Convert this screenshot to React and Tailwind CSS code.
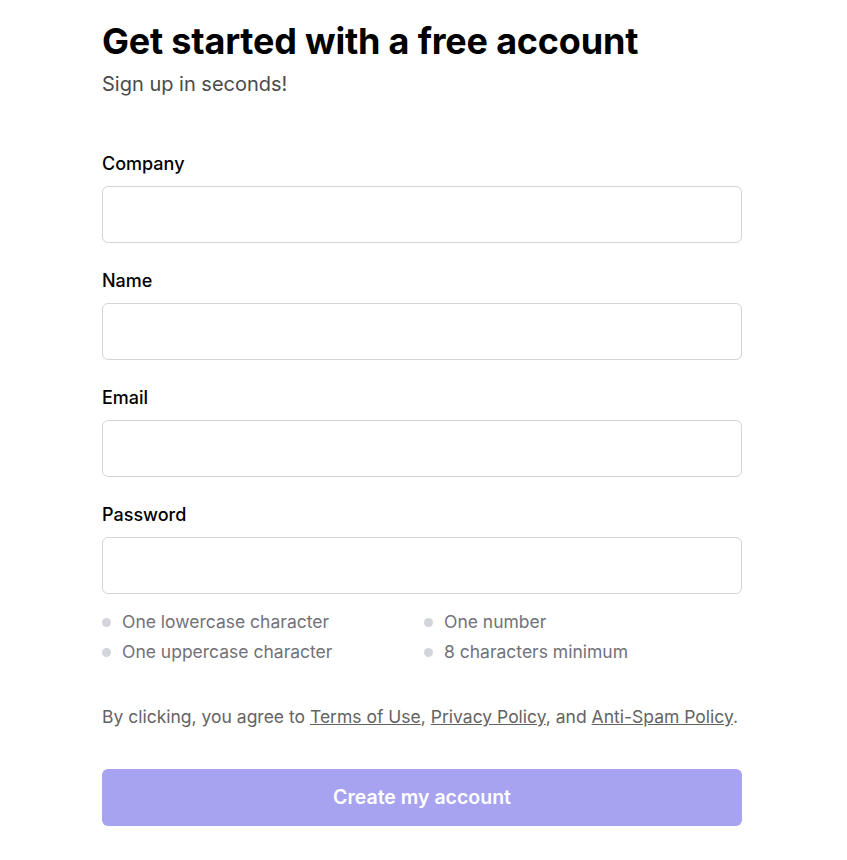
export default function App() {
  const fields = ["Company", "Name", "Email", "Password"];
  const reqs = [
    "One lowercase character",
    "One number",
    "One uppercase character",
    "8 characters minimum",
  ];
  return (
    <div className="min-h-[860px] bg-white" style={{ fontFamily: "Inter, 'Noto Sans', sans-serif" }}>
      <div className="ml-[102px] w-[640px] pt-[19px]">
        <h1 className="text-[36px] font-bold leading-[44px] tracking-[-0.2px] text-black">
          Get started with a free account
        </h1>
        <p className="mt-[7px] text-[20px] leading-[28px] text-[#4b4b4b]">Sign up in seconds!</p>
        <div className="mt-[53px] flex flex-col gap-[25px]">
          {fields.map((f) => (
            <div key={f} className="flex flex-col">
              <label className="text-[18px] font-medium leading-[26px] text-black">{f}</label>
              <input
                type={f === "Password" ? "password" : "text"}
                className="mt-[9px] h-[57px] w-full rounded-[6px] border border-[#d4d4d8] bg-white px-4 outline-none"
              />
            </div>
          ))}
        </div>
        <div className="mt-[15px] grid grid-cols-[322px_1fr] gap-y-[4px]">
          {reqs.map((r) => (
            <div key={r} className="flex items-center gap-[11px] text-[17.5px] leading-[26px] text-[#71717a]">
              <span className="h-[9px] w-[9px] rounded-full bg-[#d4d4dc]" />
              <span>{r}</span>
            </div>
          ))}
        </div>
        <p className="mt-[39px] text-[17.5px] leading-[26px] text-[#636363]">
          By clicking, you agree to <a className="underline" href="#">Terms of Use</a>,{" "}
          <a className="underline" href="#">Privacy Policy</a>, and{" "}
          <a className="underline" href="#">Anti-Spam Policy</a>.
        </p>
        <button className="mt-[39px] flex h-[57px] w-full items-center justify-center rounded-[6px] bg-[#a8a3f0] text-[19.5px] font-semibold text-white">
          Create my account
        </button>
      </div>
    </div>
  );
}
